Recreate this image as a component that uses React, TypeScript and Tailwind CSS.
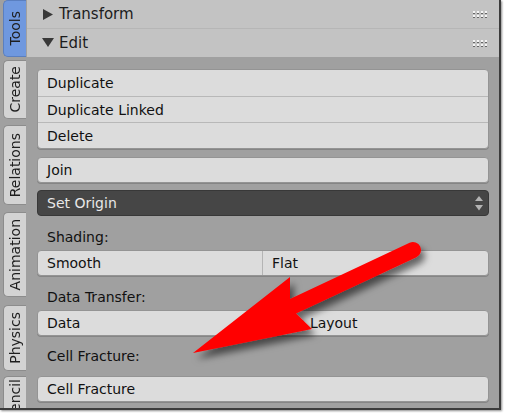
import React from "react";

const F = "font-['DejaVu_Sans',sans-serif]";

function Grip() {
  return (
    <div className="flex flex-col gap-[1px]">
      {[0, 1].map((r) => (
        <div key={r} className="flex gap-[2px]">
          {[0, 1, 2, 3].map((c) => (
            <span key={c} className="block w-[2px] h-[3px] bg-[#f4f4f4] border-b border-[#666]" />
          ))}
        </div>
      ))}
    </div>
  );
}

function Header({ label, open, first }: { label: string; open?: boolean; first?: boolean }) {
  return (
    <div
      className={`flex items-center h-[28px] pl-[15px] pr-[12px] bg-[#c3c3c3] ${first ? "" : "border-t border-[#b6b6b6] h-[29px]"}`}
    >
      <div className="w-[12px] flex items-center justify-center">
        {open ? (
          <svg width="12" height="10" viewBox="0 0 12 10">
            <polygon points="0,0 12,0 6,9" fill="#383838" />
          </svg>
        ) : (
          <svg width="10" height="11" viewBox="0 0 10 11">
            <polygon points="0,0 10,5.5 0,11" fill="#383838" />
          </svg>
        )}
      </div>
      <span className="ml-[5px] text-[15px] text-[#1c1c1c] leading-none">{label}</span>
      <div className="flex-1" />
      <Grip />
    </div>
  );
}

function Tab({ label, h, mt, active }: { label: string; h: number; mt: number; active?: boolean }) {
  return (
    <div
      style={{ height: h, marginTop: mt }}
      className={`shrink-0 w-[23px] rounded-l-[5px] border border-r-0 flex items-center justify-center overflow-hidden ${
        active ? "bg-[#6f98df] border-[#5a7fc0]" : "bg-[#d3d3d3] border-[#8c8c8c]"
      }`}
    >
      <span className="[writing-mode:vertical-rl] rotate-180 text-[14px] text-[#1e1e1e] leading-none whitespace-nowrap">
        {label}
      </span>
    </div>
  );
}

const btn =
  "rounded-[4px] border border-[#949494] bg-[#dcdcdc] shadow-[0_1px_0_#858585] text-[14px] text-[#111] leading-none";

export default function App() {
  return (
    <div className={`w-[505px] h-[413px] bg-white relative overflow-hidden ${F}`}>
      <div className="flex w-[501px] h-[410px] border-r-2 border-b-2 border-[#3b3b3b] shadow-[1px_1px_2px_rgba(0,0,0,0.45)] bg-[#a0a0a0] overflow-hidden">
        <div className="w-[27px] shrink-0 flex flex-col pl-[3px] overflow-hidden">
          <Tab label="Tools" h={57} mt={0} active />
          <Tab label="Create" h={59} mt={3} />
          <Tab label="Relations" h={80} mt={6} />
          <Tab label="Animation" h={85} mt={7} />
          <Tab label="Physics" h={66} mt={8} />
          <div className="shrink-0 h-[120px] w-[23px] mt-[5px] rounded-l-[5px] border border-r-0 border-[#8c8c8c] bg-[#d3d3d3] flex justify-center items-end pb-[21px] overflow-hidden">
            <span className="[writing-mode:vertical-rl] rotate-180 text-[14px] text-[#1e1e1e] leading-none whitespace-nowrap">
              Grease Pencil
            </span>
          </div>
        </div>
        <div className="flex-1 flex flex-col">
          <Header label="Transform" first />
          <Header label="Edit" open />
          <div className="flex flex-col px-[10px] pt-[12px]">
            <div className={`${btn} overflow-hidden flex flex-col`}>
              <div className="h-[26px] flex items-center pl-[9px]">Duplicate</div>
              <div className="h-[26px] flex items-center pl-[9px] border-t border-[#b8b8b8]">Duplicate Linked</div>
              <div className="h-[26px] flex items-center pl-[9px] border-t border-[#b8b8b8]">Delete</div>
            </div>
            <div className={`${btn} mt-[8px] h-[26px] flex items-center pl-[9px]`}>Join</div>
            <div className="mt-[7px] h-[26px] rounded-[4px] border border-[#383838] bg-[#464646] text-[14px] text-[#e8e8e8] leading-none flex items-center pl-[9px] pr-[5px]">
              <span className="flex-1">Set Origin</span>
              <svg width="8" height="15" viewBox="0 0 8 15">
                <polygon points="4,0 8,5 0,5" fill="#b4b4b4" />
                <polygon points="0,9 8,9 4,14.5" fill="#b4b4b4" />
              </svg>
            </div>
            <div className="h-[34px] pt-[8px] flex items-center pl-[10px] text-[14px] text-[#111] leading-none">
              Shading:
            </div>
            <div className={`${btn} h-[26px] flex overflow-hidden`}>
              <div className="w-1/2 flex items-center pl-[9px] border-r border-[#b4b4b4]">Smooth</div>
              <div className="w-1/2 flex items-center pl-[9px]">Flat</div>
            </div>
            <div className="h-[34px] pt-[8px] flex items-center pl-[10px] text-[14px] text-[#111] leading-none">
              Data Transfer:
            </div>
            <div className={`${btn} h-[26px] flex overflow-hidden`}>
              <div className="w-1/2 flex items-center pl-[9px] border-r border-[#b4b4b4]">Data</div>
              <div className="w-1/2 flex items-center pl-[9px]">Data Layout</div>
            </div>
            <div className="h-[40px] flex items-center pl-[10px] text-[14px] text-[#111] leading-none">
              Cell Fracture:
            </div>
            <div className={`${btn} h-[26px] flex items-center pl-[9px]`}>Cell Fracture</div>
          </div>
        </div>
      </div>
      <svg className="absolute inset-0 pointer-events-none" width="505" height="413" viewBox="0 0 505 413">
        <defs>
          <filter id="arrowShadow" x="-20%" y="-30%" width="150%" height="170%">
            <feDropShadow dx="4" dy="6" stdDeviation="3.5" floodColor="#000" floodOpacity="0.55" />
          </filter>
        </defs>
        <path
          d="M193,353 L290,277 L290,299 L409.6,242.75 A8,8 0 0 1 416.4,257.25 L296,313.6 L312,329 Z"
          fill="#ff0000"
          filter="url(#arrowShadow)"
        />
      </svg>
    </div>
  );
}
